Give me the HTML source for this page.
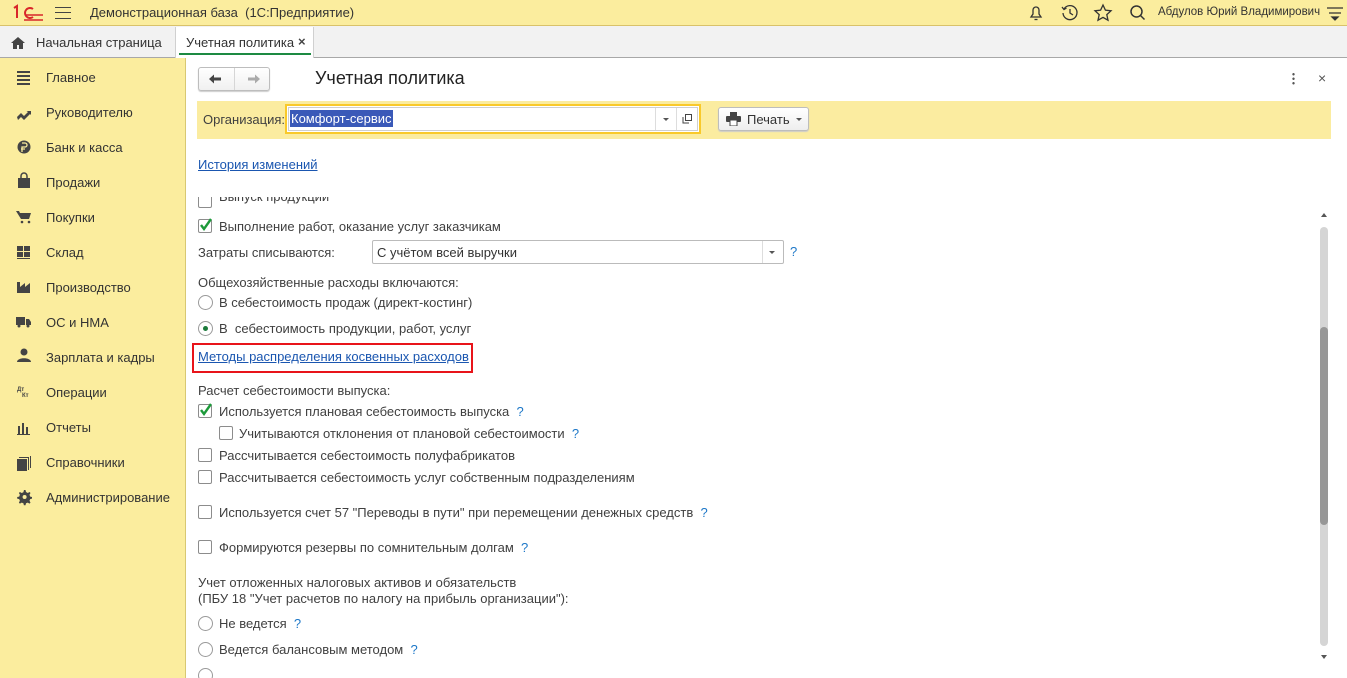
<!DOCTYPE html>
<html><head><meta charset="utf-8"><style>
*{box-sizing:border-box;margin:0;padding:0}
body{width:1347px;height:678px;overflow:hidden;background:#fff;font-family:"Liberation Sans",Arial,sans-serif;font-size:13px;color:#404040;position:relative}
.a{position:absolute;white-space:nowrap}
.top{left:0;top:0;width:1347px;height:26px;background:#fbed9e;border-bottom:1px solid #d9c26a}
.tabs{left:0;top:26px;width:1347px;height:32px;background:#f2f2f2;border-bottom:1px solid #a8a8a8}
.side{left:0;top:58px;width:186px;height:620px;background:#fbed9e;border-right:1px solid #d8c872}
.si{position:absolute;left:46px;font-size:13px;color:#333}
.cb{position:absolute;width:14px;height:14px;border:1px solid #8c8c8c;border-radius:2px;background:#fff}
.rb{position:absolute;width:15px;height:15px;border:1px solid #9a9a9a;border-radius:50%;background:#fff}
.q{color:#1e78c8}
.lk{color:#1a56b0;text-decoration:underline}
.clip{position:absolute;left:187px;top:197px;width:1130px;height:481px;overflow:hidden}
</style></head><body>
<div class="a top"></div>
<svg class="a" style="left:12px;top:4px" width="32" height="18" viewBox="0 0 32 18" fill="none" stroke="#d8262a" stroke-width="2"><path d="M2 4l3-2v12"/><path d="M21 5a5 5 0 1 0 0 8"/><path d="M12 16h19M14 11h17" stroke-width="1.6"/></svg>
<div class="a" style="left:55px;top:7px;width:16px;height:12px;border-top:1.5px solid #444;border-bottom:1.5px solid #444"><div style="margin-top:4px;border-top:1.5px solid #444"></div></div>
<div class="a" style="left:90px;top:5px;font-size:13px;color:#333">Демонстрационная база &nbsp;(1С:Предприятие)</div>
<svg class="a" style="left:1026px;top:3px" width="20" height="20" viewBox="0 0 20 20" fill="none" stroke="#333" stroke-width="1.3"><path d="M5 14h10l-2-3V7a3 3 0 0 0-6 0v4z"/><path d="M8.5 16.5h3"/></svg>
<svg class="a" style="left:1060px;top:3px" width="20" height="20" viewBox="0 0 20 20" fill="none" stroke="#333" stroke-width="1.3"><path d="M4 6A7 7 0 1 1 3 10"/><path d="M2 4l2 2.5 2.5-1.5"/><path d="M10 6v4l3 2"/></svg>
<svg class="a" style="left:1093px;top:3px" width="20" height="20" viewBox="0 0 20 20" fill="none" stroke="#333" stroke-width="1.3"><path d="M10 2l2.4 5.2 5.6.6-4.2 3.8 1.2 5.6L10 14.4 5 17.2l1.2-5.6L2 7.8l5.6-.6z"/></svg>
<svg class="a" style="left:1128px;top:3px" width="20" height="20" viewBox="0 0 20 20" fill="none" stroke="#333" stroke-width="1.5"><circle cx="8.5" cy="8.5" r="5.5"/><path d="M12.5 12.5l4 4"/></svg>
<div class="a" style="left:1158px;top:6px;font-size:11.5px;color:#333">Абдулов Юрий Владимирович</div>
<svg class="a" style="left:1327px;top:5px" width="16" height="16" viewBox="0 0 16 16" stroke="#333" stroke-width="1.3"><path d="M0 3h16M2 8h12"/><path d="M5 12h6l-3 3z" fill="#333"/></svg>

<div class="a tabs"></div>
<svg class="a" style="left:11px;top:36px" width="14" height="13" viewBox="0 0 14 13"><path d="M7 1L0 7h2v6h4V9h2v4h4V7h2z" fill="#444"/></svg>
<div class="a" style="left:36px;top:35px;color:#333">Начальная страница</div>
<div class="a" style="left:175px;top:27px;width:139px;height:31px;background:#fff;border-left:1px solid #d0d0d0;border-right:1px solid #d0d0d0"></div>
<div class="a" style="left:186px;top:35px;color:#333">Учетная политика</div>
<div class="a" style="left:298px;top:34px;color:#444;font-size:13px;font-weight:bold">×</div>
<div class="a" style="left:179px;top:53px;width:132px;height:2px;background:#1d8a42"></div>

<div class="a side"></div>
<div class="si" style="top:70px">Главное</div>
<div class="si" style="top:105px">Руководителю</div>
<div class="si" style="top:140px">Банк и касса</div>
<div class="si" style="top:175px">Продажи</div>
<div class="si" style="top:210px">Покупки</div>
<div class="si" style="top:245px">Склад</div>
<div class="si" style="top:280px">Производство</div>
<div class="si" style="top:315px">ОС и НМА</div>
<div class="si" style="top:350px">Зарплата и кадры</div>
<div class="si" style="top:385px">Операции</div>
<div class="si" style="top:420px">Отчеты</div>
<div class="si" style="top:455px">Справочники</div>
<div class="si" style="top:490px">Администрирование</div>
<svg class="a" style="left:16px;top:70px" width="16" height="440" viewBox="0 0 16 440" fill="#444">
<rect x="1" y="1" width="13" height="2"/><rect x="1" y="5" width="13" height="2"/><rect x="1" y="9" width="13" height="2"/><rect x="1" y="13" width="13" height="2"/>
<path d="M1 47l4-4 3 3 4-4-1.5-1H15v4l-1-1-6 6-3-3-3 3z"/>
<circle cx="8" cy="77" r="6.5"/><path d="M6 73h3a2 2 0 0 1 0 4H6v5M5 79h4" stroke="#fbed9e" stroke-width="1.3" fill="none"/>
<path d="M2 108h12v10H2z"/><path d="M5 108v-2a3 3 0 0 1 6 0v2" stroke="#444" stroke-width="1.5" fill="none"/>
<path d="M0 141h3l1 2h11l-2 6H5z"/><circle cx="6" cy="152" r="1.3"/><circle cx="13" cy="152" r="1.3"/>
<rect x="1" y="176" width="6" height="5"/><rect x="8" y="176" width="6" height="5"/><rect x="1" y="182" width="6" height="5"/><rect x="8" y="182" width="6" height="5"/><rect x="1" y="188" width="13" height="1"/>
<path d="M1 223v-11h3v5l5-4v4l5-4v10z"/>
<path d="M0 247h9v8H0zM10 249h3l2 3v3h-5z"/><circle cx="3" cy="256" r="1.5"/><circle cx="12" cy="256" r="1.5"/>
<circle cx="8" cy="282" r="3.5"/><path d="M1 292c0-5 14-5 14 0z"/>
<text x="1" y="321" font-size="6" font-family="Liberation Sans" font-weight="bold">Дт</text><text x="6" y="327" font-size="6" font-family="Liberation Sans" font-weight="bold">Кт</text>
<path d="M1 364h13v1H1zM2 356h2v8H2zM6 353h2v11H6zM10 357h2v7h-2z"/>
<path d="M1 389h10v12H1z"/><path d="M12 388h1v12h-1zM14 386h1v12h-1zM3 387h10v1H3z"/>
<path d="M8 420l1.5 0 .5 2 1.8 1 1.7-1 1 1-1 1.8.7 1.8 2 .4v1.6l-2 .5-.7 1.7 1 1.8-1 1-1.8-1-1.7.7-.5 2h-1.6l-.5-2-1.7-.7-1.8 1-1-1 1-1.8-.7-1.7-2-.5v-1.6l2-.4.7-1.8-1-1.8 1-1 1.8 1 1.7-.7.5-2z"/><circle cx="8.6" cy="427" r="2" fill="#fbed9e"/>
</svg>

<div class="a" style="left:198px;top:67px;width:72px;height:24px;border:1px solid #bdbdbd;border-radius:3px;background:linear-gradient(#fff,#f0f0f0);box-shadow:0 1px 1px #ccc"></div>
<div class="a" style="left:234px;top:68px;width:1px;height:22px;background:#d6d6d6"></div>
<svg class="a" style="left:208px;top:73px" width="56" height="12" viewBox="0 0 56 12"><path d="M1 6l5-4.5V4.5h7v3H6v3z" fill="#444"/><path d="M52 6l-5-4.5V4.5h-7v3h7v3z" fill="#aaa"/></svg>
<div class="a" style="left:315px;top:68px;font-size:18px;color:#222">Учетная политика</div>
<div class="a" style="left:1292px;top:72px;width:3px;height:14px;background:radial-gradient(circle,#555 1px,transparent 1.4px) 0 0/3px 4.5px"></div>
<div class="a" style="left:1318px;top:70px;font-size:14px;color:#555">×</div>

<div class="a" style="left:197px;top:101px;width:1134px;height:38px;background:#fbeca0"></div>
<div class="a" style="left:203px;top:112px;color:#404040">Организация:</div>
<div class="a" style="left:285px;top:104px;width:416px;height:30px;border:2px solid #f9c92a;background:#fff"></div>
<div class="a" style="left:288px;top:107px;width:410px;height:24px;border:1px solid #cfcfcf"></div>
<div class="a" style="left:290px;top:110px;background:#3a59b8;color:#fff;padding:1px 1px;line-height:15px">Комфорт-сервис</div>
<div class="a" style="left:655px;top:108px;width:1px;height:22px;background:#ddd"></div>
<div class="a" style="left:676px;top:108px;width:1px;height:22px;background:#ddd"></div>
<div class="a" style="left:663px;top:118px;border-left:3px solid transparent;border-right:3px solid transparent;border-top:3px solid #555"></div>
<svg class="a" style="left:682px;top:114px" width="10" height="10" viewBox="0 0 10 10" fill="none" stroke="#444"><rect x="3.5" y="0.5" width="6" height="6"/><path d="M1 3v6h6"/></svg>
<div class="a" style="left:718px;top:107px;width:91px;height:24px;border:1px solid #bdbdbd;border-radius:3px;background:linear-gradient(#fff,#eee);box-shadow:0 1px 1px #ccc"></div>
<svg class="a" style="left:726px;top:112px" width="15" height="14" viewBox="0 0 15 14" fill="#444"><rect x="4" y="0" width="7" height="4"/><rect x="0" y="4" width="15" height="6" rx="1"/><rect x="4" y="8" width="7" height="6" fill="#fff" stroke="#444"/></svg>
<div class="a" style="left:747px;top:112px;color:#333">Печать</div>
<div class="a" style="left:796px;top:118px;border-left:3px solid transparent;border-right:3px solid transparent;border-top:3px solid #555"></div>

<div class="a lk" style="left:198px;top:157px">История изменений</div>

<div class="clip">
<div class="cb" style="left:11px;top:-3px"></div><div class="a" style="left:32px;top:-8px">Выпуск продукции</div>
<div class="cb" style="left:11px;top:22px"></div>
<svg class="a" style="left:11px;top:20px" width="16" height="16" viewBox="0 0 16 16"><path d="M3 8l3 4 7-10" stroke="#1d9a3a" stroke-width="2.4" fill="none"/></svg>
<div class="a" style="left:32px;top:22px">Выполнение работ, оказание услуг заказчикам</div>
<div class="a" style="left:11px;top:48px">Затраты списываются:</div>
<div class="a" style="left:185px;top:43px;width:412px;height:24px;border:1px solid #bbb;border-radius:2px;background:#fff"></div>
<div class="a" style="left:575px;top:44px;width:1px;height:22px;background:#ddd"></div>
<div class="a" style="left:582px;top:54px;border-left:3px solid transparent;border-right:3px solid transparent;border-top:3px solid #555"></div>
<div class="a" style="left:190px;top:48px;color:#333">С учётом всей выручки</div>
<div class="a q" style="left:603px;top:47px">?</div>
<div class="a" style="left:11px;top:78px">Общехозяйственные расходы включаются:</div>
<div class="rb" style="left:11px;top:98px"></div><div class="a" style="left:32px;top:98px">В себестоимость продаж (директ-костинг)</div>
<div class="rb" style="left:11px;top:124px"></div><div class="a" style="left:16px;top:129px;width:5px;height:5px;border-radius:50%;background:#1b7a3a"></div>
<div class="a" style="left:32px;top:124px">В &nbsp;себестоимость продукции, работ, услуг</div>
<div class="a" style="left:5px;top:146px;width:281px;height:30px;border:2px solid #e8141a"></div>
<div class="a lk" style="left:11px;top:152px">Методы распределения косвенных расходов</div>
<div class="a" style="left:11px;top:186px">Расчет себестоимости выпуска:</div>
<div class="cb" style="left:11px;top:207px"></div>
<svg class="a" style="left:11px;top:205px" width="16" height="16" viewBox="0 0 16 16"><path d="M3 8l3 4 7-10" stroke="#1d9a3a" stroke-width="2.4" fill="none"/></svg>
<div class="a" style="left:32px;top:207px">Используется плановая себестоимость выпуска <span class="q">&nbsp;?</span></div>
<div class="cb" style="left:32px;top:229px"></div>
<div class="a" style="left:52px;top:229px">Учитываются отклонения от плановой себестоимости <span class="q">&nbsp;?</span></div>
<div class="cb" style="left:11px;top:251px"></div><div class="a" style="left:32px;top:251px">Рассчитывается себестоимость полуфабрикатов</div>
<div class="cb" style="left:11px;top:273px"></div><div class="a" style="left:32px;top:273px">Рассчитывается себестоимость услуг собственным подразделениям</div>
<div class="cb" style="left:11px;top:308px"></div><div class="a" style="left:32px;top:308px">Используется счет 57 "Переводы в пути" при перемещении денежных средств <span class="q">&nbsp;?</span></div>
<div class="cb" style="left:11px;top:343px"></div><div class="a" style="left:32px;top:343px">Формируются резервы по сомнительным долгам <span class="q">&nbsp;?</span></div>
<div class="a" style="left:11px;top:378px">Учет отложенных налоговых активов и обязательств</div>
<div class="a" style="left:11px;top:394px">(ПБУ 18 "Учет расчетов по налогу на прибыль организации"):</div>
<div class="rb" style="left:11px;top:419px"></div><div class="a" style="left:32px;top:419px">Не ведется <span class="q">&nbsp;?</span></div>
<div class="rb" style="left:11px;top:445px"></div><div class="a" style="left:32px;top:445px">Ведется балансовым методом <span class="q">&nbsp;?</span></div>
<div class="rb" style="left:11px;top:471px"></div>
</div>

<div class="a" style="left:1321px;top:213px;border-left:3px solid transparent;border-right:3px solid transparent;border-bottom:4px solid #555"></div>
<div class="a" style="left:1320px;top:227px;width:8px;height:419px;border-radius:4px;background:#d5d5d5"></div>
<div class="a" style="left:1320px;top:327px;width:8px;height:198px;border-radius:4px;background:#979797"></div>
<div class="a" style="left:1321px;top:655px;border-left:3px solid transparent;border-right:3px solid transparent;border-top:4px solid #555"></div>
</body></html>
